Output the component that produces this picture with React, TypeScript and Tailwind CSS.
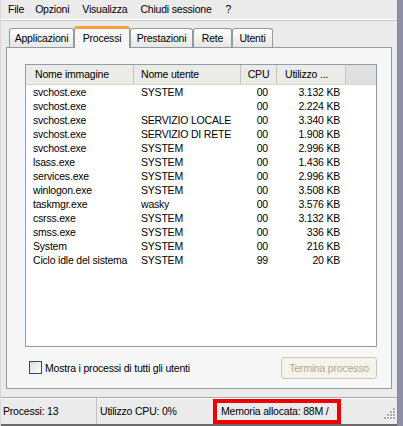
import React from "react";

const rows: [string, string, string, string][] = [
  ["svchost.exe", "SYSTEM", "00", "3.132 KB"],
  ["svchost.exe", "", "00", "2.224 KB"],
  ["svchost.exe", "SERVIZIO LOCALE", "00", "3.340 KB"],
  ["svchost.exe", "SERVIZIO DI RETE", "00", "1.908 KB"],
  ["svchost.exe", "SYSTEM", "00", "2.996 KB"],
  ["lsass.exe", "SYSTEM", "00", "1.436 KB"],
  ["services.exe", "SYSTEM", "00", "2.996 KB"],
  ["winlogon.exe", "SYSTEM", "00", "3.508 KB"],
  ["taskmgr.exe", "wasky", "00", "3.576 KB"],
  ["csrss.exe", "SYSTEM", "00", "3.132 KB"],
  ["smss.exe", "SYSTEM", "00", "336 KB"],
  ["System", "SYSTEM", "00", "216 KB"],
  ["Ciclo idle del sistema", "SYSTEM", "99", "20 KB"],
];

const Tab = ({ label, width, active }: { label: string; width: string; active?: boolean }) =>
  active ? (
    <div
      className={`${width} h-[22px] -mb-px z-10 flex items-start justify-center pt-[4px] bg-[#f7f7f7] border-x border-[#919b9c] border-t-[3px] border-t-[#f3a23a] rounded-t-[3px]`}
    >
      {label}
    </div>
  ) : (
    <div
      className={`${width} h-[19px] flex items-center justify-center bg-gradient-to-b from-white to-[#e6e6e6] border-x border-t border-[#919b9c] rounded-t-[3px]`}
    >
      {label}
    </div>
  );

export default function App() {
  return (
    <div className="w-[403px] h-[426px] flex flex-row overflow-hidden whitespace-nowrap font-['Liberation_Sans',Arial,sans-serif] text-[10.5px] tracking-[-0.2px] leading-none text-black">
      <div className="w-[397px] flex flex-col bg-[#ebebeb] border-l border-[#d8d8d8]">
        {/* menu */}
        <div className="h-[20px] flex items-center border-b border-white shadow-[0_1px_0_#c8c8c8] pl-[1px]">
          <span className="px-[6px]">File</span>
          <span className="px-[6px] ml-[-1px]">Opzioni</span>
          <span className="px-[6px] ml-[1px]">Visualizza</span>
          <span className="px-[6px] ml-[1px]">Chiudi sessione</span>
          <span className="pl-[8px]">?</span>
        </div>

        {/* tabs */}
        <div className="flex flex-row items-end pt-[5px] pl-[8px] h-[27px]">
          <Tab label="Applicazioni" width="w-[65px]" />
          <Tab label="Processi" width="w-[56px]" active />
          <Tab label="Prestazioni" width="w-[63px]" />
          <Tab label="Rete" width="w-[39px]" />
          <Tab label="Utenti" width="w-[41px]" />
        </div>

        {/* panel */}
        <div className="ml-[5px] mr-[5px] h-[343px] bg-[#f7f7f7] border border-[#919b9c] flex flex-col pt-[16px] pl-[18px] pr-[14px]">
          <div className="h-[283px] bg-white border border-[#8e9cad] flex flex-col">
            <div className="h-[20px] flex flex-row bg-[#ebebe8] border-b border-[#d6d3c8]">
              <div className="w-[108px] flex items-center pl-[9px] border-r border-[#c5c5c5]">Nome immagine</div>
              <div className="w-[107px] flex items-center pl-[7px] border-r border-[#c5c5c5]">Nome utente</div>
              <div className="w-[36px] flex items-center justify-center border-r border-[#c5c5c5]">CPU</div>
              <div className="w-[69px] flex items-center pl-[8px] border-r border-[#c5c5c5]">Utilizzo ...</div>
              <div className="flex-1 bg-[#e0e0e0]" />
            </div>
            <div className="flex flex-col">
              {rows.map((r, i) => (
                <div key={i} className="h-[14px] leading-[14px] flex flex-row">
                  <div className="w-[108px] pl-[7px] overflow-hidden">{r[0]}</div>
                  <div className="w-[107px] pl-[7px]">{r[1]}</div>
                  <div className="w-[36px] text-right pr-[9px]">{r[2]}</div>
                  <div className="w-[69px] text-right pr-[6px]">{r[3]}</div>
                </div>
              ))}
            </div>
          </div>
          <div className="flex flex-row items-center justify-between mt-[10px]">
            <div className="flex flex-row items-center pl-[4px]">
              <div className="w-[13px] h-[13px] border border-[#1c5180] bg-gradient-to-br from-[#dcdcd7] to-white" />
              <span className="pl-[3px]">Mostra i processi di tutti gli utenti</span>
            </div>
            <div className="w-[96px] h-[22px] flex items-center justify-center border border-[#c9c7ba] rounded-[3px] bg-[#f5f4ea] text-[#aca899]">
              Termina processo
            </div>
          </div>
        </div>

        {/* status bar */}
        <div className="mt-[8px] h-[27px] flex flex-row items-center border-t border-[#a8a8a8] shadow-[inset_0_1px_0_white]">
          <div className="w-[96px] h-full flex items-center pl-[2px] border-r border-[#c2c2c2]">Processi: 13</div>
          <div className="w-[116px] h-full flex items-center pl-[3px]">Utilizzo CPU: 0%</div>
          <div className="w-[128px] h-[25px] flex items-center pl-[4px] border-[4px] border-[#ee0000]">Memoria allocata: 88M /</div>
          <div className="flex-1 h-full flex items-end justify-end pb-[4px] pr-[1px]">
            <svg width="12" height="12" viewBox="0 0 12 12">
              {[
                [9, 0],
                [6, 3],
                [9, 3],
                [3, 6],
                [6, 6],
                [9, 6],
                [0, 9],
                [3, 9],
                [6, 9],
                [9, 9],
              ].map(([x, y], i) => (
                <g key={i}>
                  <rect x={x + 1} y={y + 1} width="2" height="2" fill="#ffffff" />
                  <rect x={x} y={y} width="2" height="2" fill="#a8a8a8" />
                </g>
              ))}
            </svg>
          </div>
        </div>
        <div className="h-[2px] bg-[#6b6b6b]" />
      </div>
      <div className="w-px bg-[#8a8a8a]" />
      <div className="flex-1 bg-[#8e8ea6]" />
    </div>
  );
}
